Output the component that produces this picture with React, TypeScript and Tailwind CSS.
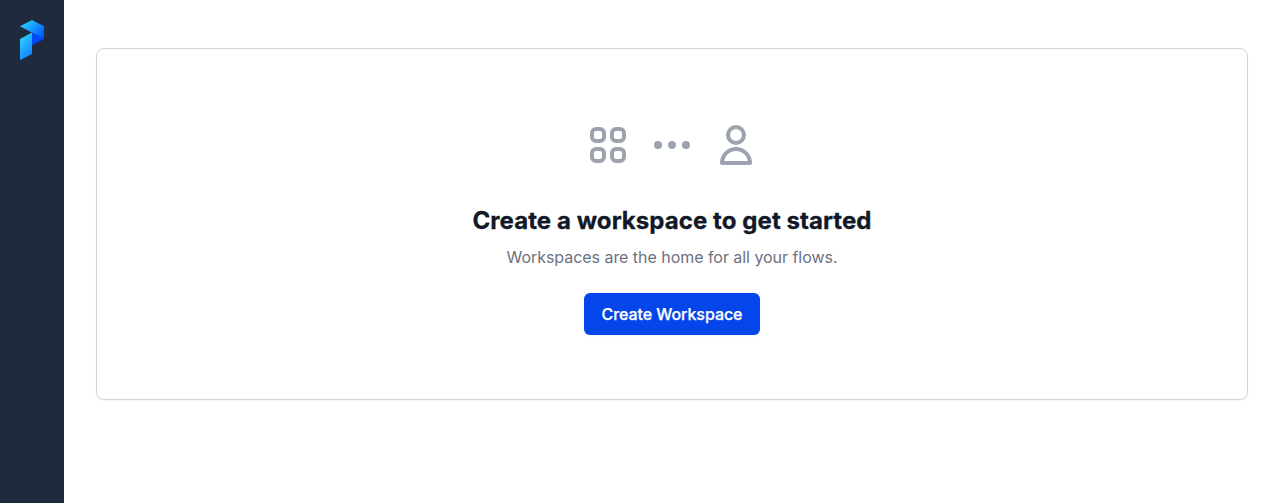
function Logo() {
  return (
    <svg className="h-10 w-6" viewBox="0 0 24 40" fill="none">
      <defs>
        <linearGradient id="top" x1="3" y1="1" x2="21" y2="18" gradientUnits="userSpaceOnUse">
          <stop stopColor="#2ad4ff" />
          <stop offset="1" stopColor="#0058ff" />
        </linearGradient>
        <linearGradient id="stem" x1="0" y1="20" x2="14" y2="32" gradientUnits="userSpaceOnUse">
          <stop stopColor="#2bccff" />
          <stop offset="1" stopColor="#1282ff" />
        </linearGradient>
      </defs>
      <path d="M12 12.5 24 19 12 25.3Z" fill="#0048f5" />
      <path d="M0 6.3 12 0 24 6.3V19Z" fill="url(#top)" />
      <path d="M0 19 12 12.5V33.9L0 40.2Z" fill="url(#stem)" />
    </svg>
  );
}

function OutlineIcon({ paths }: { paths: string[] }) {
  return (
    <svg
      className="size-12"
      viewBox="0 0 24 24"
      fill="none"
      stroke="currentColor"
      strokeWidth={2}
      strokeLinecap="round"
      strokeLinejoin="round"
    >
      {paths.map((d) => (
        <path key={d} d={d} />
      ))}
    </svg>
  );
}

const gridPaths = [
  "M4 6a2 2 0 012-2h2a2 2 0 012 2v2a2 2 0 01-2 2H6a2 2 0 01-2-2V6z",
  "M14 6a2 2 0 012-2h2a2 2 0 012 2v2a2 2 0 01-2 2h-2a2 2 0 01-2-2V6z",
  "M4 16a2 2 0 012-2h2a2 2 0 012 2v2a2 2 0 01-2 2H6a2 2 0 01-2-2v-2z",
  "M14 16a2 2 0 012-2h2a2 2 0 012 2v2a2 2 0 01-2 2h-2a2 2 0 01-2-2v-2z",
];
const dotsPaths = [
  "M6 12a1 1 0 11-2 0 1 1 0 012 0z",
  "M13 12a1 1 0 11-2 0 1 1 0 012 0z",
  "M20 12a1 1 0 11-2 0 1 1 0 012 0z",
];
const userPaths = [
  "M16 7a4 4 0 11-8 0 4 4 0 018 0z",
  "M12 14a7 7 0 00-7 7h14a7 7 0 00-7-7z",
];

export default function App() {
  return (
    <div className="flex h-screen bg-white font-['Inter',sans-serif]">
      <aside className="flex w-16 shrink-0 flex-col items-center bg-[#1f2a3c] pt-5">
        <Logo />
      </aside>
      <main className="flex-1 px-8 pt-12">
        <section className="flex h-[352px] flex-col items-center rounded-lg border border-[#d1d5db] pt-[72px] shadow-[0_1px_2px_0_rgba(0,0,0,0.05)]">
          <div className="flex gap-4 text-[#9ca3af]">
            <OutlineIcon paths={gridPaths} />
            <OutlineIcon paths={dotsPaths} />
            <OutlineIcon paths={userPaths} />
          </div>
          <h1 className="mt-9 text-2xl font-bold tracking-[0.07px] text-[#111827] [-webkit-text-stroke:0.3px_#111827]">
            Create a workspace to get started
          </h1>
          <p className="mt-2 text-base tracking-[-0.04px] text-[#6b7280]">
            Workspaces are the home for all your flows.
          </p>
          <button className="mt-6 h-[42px] w-44 rounded-md bg-[#0446e9] text-base font-medium tracking-[-0.06px] text-white shadow-[0_1px_2px_0_rgba(0,0,0,0.05)] [-webkit-text-stroke:0.25px_#fff]">
            Create Workspace
          </button>
        </section>
      </main>
    </div>
  );
}
